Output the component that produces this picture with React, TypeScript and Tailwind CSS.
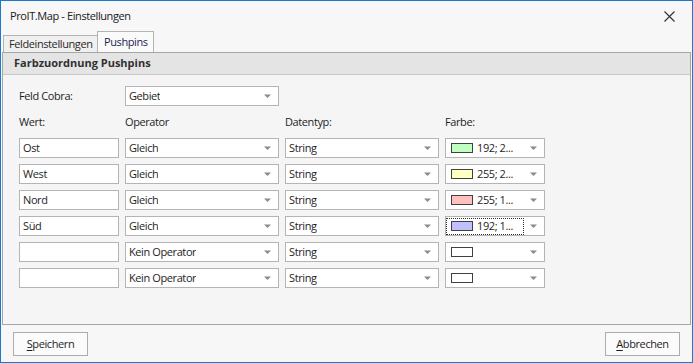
const rows = [
  { wert: "Ost", op: "Gleich", color: "#c0ffc0", label: "192; 2..." },
  { wert: "West", op: "Gleich", color: "#ffffc0", label: "255; 2..." },
  { wert: "Nord", op: "Gleich", color: "#ffc0c0", label: "255; 1..." },
  { wert: "Süd", op: "Gleich", color: "#c0c0ff", label: "192; 1...", focus: true },
  { wert: "", op: "Kein Operator", color: "#ffffff", label: "" },
  { wert: "", op: "Kein Operator", color: "#ffffff", label: "" },
];

function Arrow() {
  return (
    <svg width="7" height="4" viewBox="0 0 7 4" className="shrink-0">
      <path d="M0 0.5 H7 L3.5 4 Z" fill="#8a8a8a" />
    </svg>
  );
}

function Combo({ text }: { text: string }) {
  return (
    <div className="flex h-[20px] items-center justify-between border border-[#b4b4b4] bg-white pl-[3px] pr-[7px]">
      <span className="truncate">{text}</span>
      <Arrow />
    </div>
  );
}

function ColorCombo({ color, label, focus }: { color: string; label: string; focus?: boolean }) {
  return (
    <div className="flex h-[20px] items-center justify-between border border-[#b4b4b4] bg-white pr-[7px]">
      <div
        className={`flex h-[17px] w-[78px] items-center pl-[4px] ${
          focus ? "border border-dotted border-[#303030]" : "border border-transparent"
        }`}
      >
        <span className="h-[10px] w-[22px] shrink-0 border border-[#404040]" style={{ backgroundColor: color }} />
        <span className="ml-[4px] whitespace-nowrap">{label}</span>
      </div>
      <Arrow />
    </div>
  );
}

export default function App() {
  return (
    <div className="flex h-[363px] w-[693px] flex-col border border-[#1b78cc] bg-[#f7f7f7] font-['Open_Sans',sans-serif] text-[11px] tracking-[-0.4px] text-[#1e1e1e]">
      {/* Titelleiste */}
      <div className="flex h-[30px] items-center justify-between pl-[9px] pr-[17px]">
        <span className="text-[#202020]">ProIT.Map - Einstellungen</span>
        <svg width="11" height="11" viewBox="0 0 11 11">
          <path d="M0.5 0.5 L10.5 10.5 M10.5 0.5 L0.5 10.5" stroke="#303030" strokeWidth="1.1" />
        </svg>
      </div>

      {/* Reiter */}
      <div className="flex h-[21px] items-end pl-[2px]">
        <div className="flex h-[17px] w-[94px] items-center whitespace-nowrap border-l border-t border-[#b4b4b4] bg-[#f0f0f0] pl-[5px] text-[#2a2a2a]">
          Feldeinstellungen
        </div>
        <div className="flex h-[21px] w-[57px] items-center border border-b-0 border-[#b4b4b4] bg-[#fafafa] pl-[6px] text-[#1c2550]">
          Pushpins
        </div>
      </div>

      {/* Gruppe */}
      <div className="mx-[1px] flex h-[273px] flex-col border border-[#a6a6a6] bg-[#f5f5f5]">
        <div className="flex h-[22px] items-center border-b border-[#c8c8c8] bg-[#e4e4e4] pl-[11px] font-bold tracking-normal text-[#303030]">
          Farbzuordnung Pushpins
        </div>
        <div className="pl-[16px] pt-[11px]">
          <div className="grid grid-cols-[100px_154px_154px_100px] gap-x-[6px]">
            <div className="flex h-[20px] items-center">Feld Cobra:</div>
            <Combo text="Gebiet" />
          </div>
          <div className="mt-[8px] grid h-[16px] grid-cols-[100px_154px_154px_100px] items-center gap-x-[6px]">
            <span>Wert:</span>
            <span>Operator</span>
            <span>Datentyp:</span>
            <span>Farbe:</span>
          </div>
          <div className="mt-[8px] grid grid-cols-[100px_154px_154px_100px] gap-x-[6px] gap-y-[6px]">
            {rows.map((r, i) => (
              <div key={i} className="contents">
                <div className="flex h-[20px] items-center border border-[#b4b4b4] bg-white pl-[3px]">{r.wert}</div>
                <Combo text={r.op} />
                <Combo text="String" />
                <ColorCombo color={r.color} label={r.label} focus={r.focus} />
              </div>
            ))}
          </div>
        </div>
      </div>

      {/* Schaltflächen */}
      <div className="flex flex-1 items-start justify-between pl-[12px] pr-[12px] pt-[7px]">
        <button className="h-[24px] w-[75px] border border-[#adadad] bg-[#fbfbfb] text-[#1e1e1e]">
          <span className="underline underline-offset-2">S</span>peichern
        </button>
        <button className="h-[24px] w-[75px] border border-[#adadad] bg-[#fbfbfb] text-[#1e1e1e]">
          <span className="underline underline-offset-2">A</span>bbrechen
        </button>
      </div>
    </div>
  );
}
